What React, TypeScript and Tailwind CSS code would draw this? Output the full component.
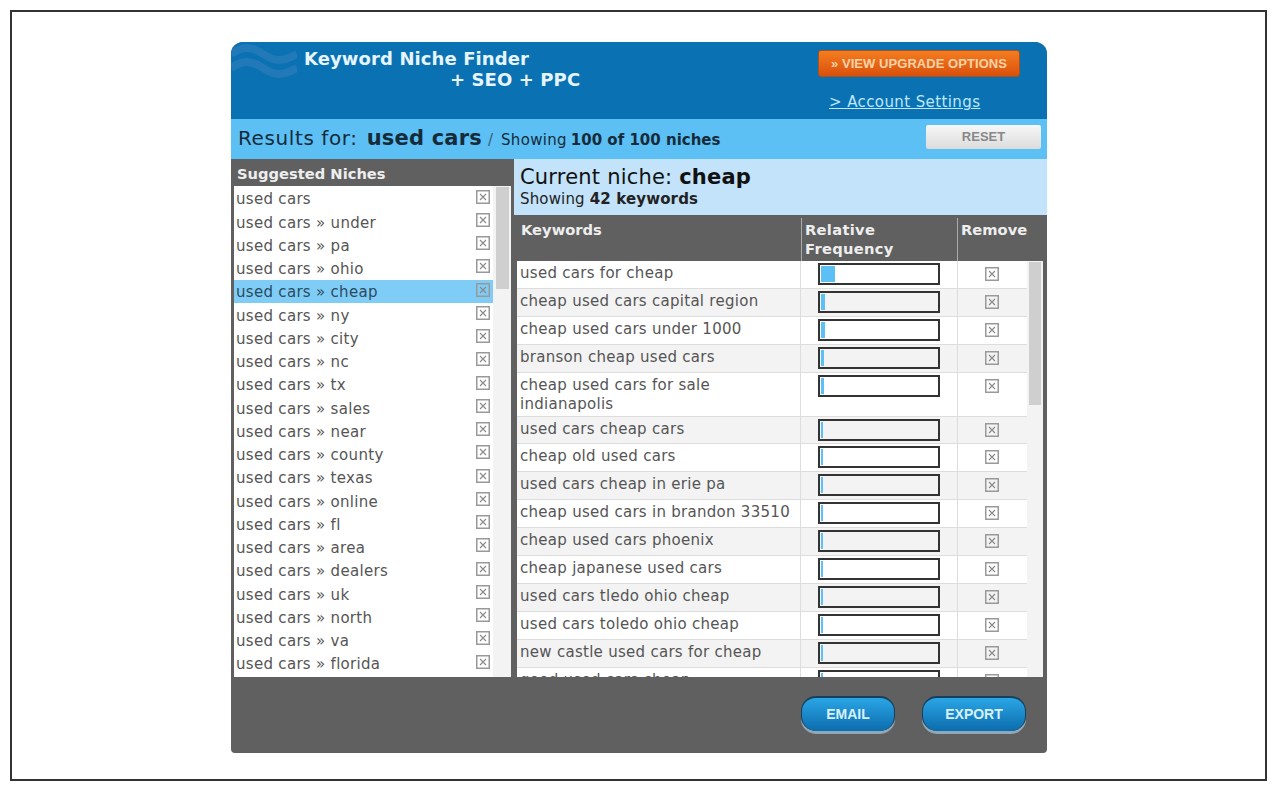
const niches = [
  "used cars",
  "used cars » under",
  "used cars » pa",
  "used cars » ohio",
  "used cars » cheap",
  "used cars » ny",
  "used cars » city",
  "used cars » nc",
  "used cars » tx",
  "used cars » sales",
  "used cars » near",
  "used cars » county",
  "used cars » texas",
  "used cars » online",
  "used cars » fl",
  "used cars » area",
  "used cars » dealers",
  "used cars » uk",
  "used cars » north",
  "used cars » va",
  "used cars » florida",
];

const keywords = [
  { name: "used cars for cheap", fill: 14 },
  { name: "cheap used cars capital region", fill: 4 },
  { name: "cheap used cars under 1000", fill: 4 },
  { name: "branson cheap used cars", fill: 3 },
  { name: "cheap used cars for sale indianapolis", fill: 3, tall: true },
  { name: "used cars cheap cars", fill: 2 },
  { name: "cheap old used cars", fill: 2 },
  { name: "used cars cheap in erie pa", fill: 2 },
  { name: "cheap used cars in brandon 33510", fill: 2 },
  { name: "cheap used cars phoenix", fill: 2 },
  { name: "cheap japanese used cars", fill: 2 },
  { name: "used cars tledo ohio cheap", fill: 2 },
  { name: "used cars toledo ohio cheap", fill: 2 },
  { name: "new castle used cars for cheap", fill: 2 },
  { name: "good used cars cheap", fill: 2 },
];

function RemoveIcon() {
  return (
    <svg width="14" height="14" viewBox="0 0 14 14" className="shrink-0">
      <rect x="0.75" y="0.75" width="12.5" height="12.5" fill="none" stroke="#999" strokeWidth="1.5" />
      <path d="M4 4l6 6M10 4l-6 6" stroke="#888" strokeWidth="1.1" />
    </svg>
  );
}

function PillButton({ label, width }: { label: string; width: string }) {
  return (
    <button
      className={`${width} h-[35px] rounded-[15px] border-x border-t-2 border-b-0 border-[#17405c] bg-gradient-to-b from-[#2ba6e6] to-[#0a6cad] font-['Liberation_Sans',sans-serif] text-[14px] font-bold text-[#d8f0fc] shadow-[0_3px_0_#8fa9b8]`}
    >
      {label}
    </button>
  );
}

export default function App() {
  return (
    <div className="h-[794px] w-[1280px] overflow-hidden bg-white pt-[10px] pl-[10px] font-['DejaVu_Sans',sans-serif]">
      <div className="h-[771px] w-[1257px] border-2 border-[#333] pt-[30px] pl-[219px]">
        <div className="flex h-[711px] w-[816px] flex-col overflow-hidden rounded-t-[12px] rounded-b-[4px] bg-[#606060]">
          {/* header */}
          <header className="relative flex h-[77px] shrink-0 justify-between bg-[#0a71b3]">
            <svg width="66" height="34" viewBox="0 0 66 34" fill="none" className="absolute top-[2px] left-0">
              <path d="M0 10c12-8 20-8 32 0s20 8 34 0" stroke="#2179b8" strokeWidth="8" />
              <path d="M0 24c12-8 20-8 32 0s20 8 34 0" stroke="#2179b8" strokeWidth="8" />
            </svg>
            <div className="relative pt-[6px] pl-[73px] text-[18px] leading-[21px] font-bold tracking-[0.1px] text-[#e6f5fd]">
              <div>Keyword Niche Finder</div>
              <div className="pl-[146px]">+ SEO + PPC</div>
            </div>
            <div className="flex w-[229px] shrink-0 flex-col pt-[8px]">
              <button className="h-[27px] w-[202px] rounded-[3px] border border-[#a8521c] bg-gradient-to-b from-[#f47d20] to-[#d9500b] font-['Liberation_Sans',sans-serif] text-[13px] font-bold tracking-[0.05px] text-[#fbd3a8]">
                » VIEW UPGRADE OPTIONS
              </button>
              <a className="mt-[15px] ml-[11px] text-[15px] leading-[20px] tracking-[0.4px] text-[#bfe7fb] underline">&gt; Account Settings</a>
            </div>
          </header>

          {/* results bar */}
          <div className="flex h-[40px] shrink-0 items-center justify-between bg-[#5cc0f4] pr-[6px] pl-[7px]">
            <div className="-mt-[1px] flex items-baseline text-[#152b3a]">
              <span className="text-[20px] tracking-[0.6px]">Results for:</span>
              <span className="ml-[9px] text-[21px] font-bold tracking-[0.2px]">used cars</span>
              <span className="ml-[6px] text-[15px] text-[#3a5d73]">/</span>
              <span className="ml-[8px] text-[15px] tracking-[0.3px]">Showing</span>
              <span className="ml-[4px] text-[15px] font-bold">100 of 100 niches</span>
            </div>
            <button className="mb-[4px] h-[24px] w-[115px] rounded-[2px] bg-gradient-to-b from-[#f7f7f7] to-[#dcdcdc] font-['Liberation_Sans',sans-serif] text-[13px] font-bold text-[#888]">
              RESET
            </button>
          </div>

          <div className="flex min-h-0 flex-1">
            {/* left column */}
            <aside className="flex w-[283px] shrink-0 flex-col">
              <h2 className="h-[27px] shrink-0 pt-[5px] pl-[6px] text-[14.7px] leading-[20px] font-bold text-[#eee]">Suggested Niches</h2>
              <div className="mx-[3px] flex min-h-0 flex-1 overflow-hidden bg-white">
                <ul className="min-w-0 flex-1 pt-[1px]">
                  {niches.map((n, i) => (
                    <li
                      key={n}
                      className={`flex h-[23.25px] items-center justify-between pr-[3px] pl-[2px] text-[15px] tracking-[0.3px] ${
                        i === 4 ? "bg-[#7fcdf7] text-[#2b4a5e]" : "text-[#555]"
                      }`}
                    >
                      <span className="pt-[2px]">{n}</span>
                      <span className="pb-[4px]">
                        <RemoveIcon />
                      </span>
                    </li>
                  ))}
                </ul>
                <div className="w-[18px] shrink-0 bg-[#f3f3f3] pt-[1px] pl-[3px]">
                  <div className="h-[102px] w-[13px] bg-[#cfcfcf]" />
                </div>
              </div>
            </aside>

            {/* right column */}
            <section className="flex min-w-0 flex-1 flex-col">
              <div className="h-[56px] shrink-0 bg-[#c2e3fa] pt-[5px] pl-[6px] text-[#111]">
                <div className="text-[21px] leading-[26px] tracking-[0.2px]">
                  Current niche: <b>cheap</b>
                </div>
                <div className="text-[15px] leading-[18px] tracking-[0.15px] text-[#222]">
                  Showing <b>42 keywords</b>
                </div>
              </div>

              <div className="flex h-[46px] shrink-0 pt-[3px] text-[14.7px] leading-[19px] font-bold text-[#eee]">
                <div className="w-[287px] pt-[2px] pl-[7px]">Keywords</div>
                <div className="w-[156px] border-l border-[#aaa] pt-[2px] pl-[3px] tracking-[0.3px]">
                  Relative
                  <br />
                  Frequency
                </div>
                <div className="border-l border-[#aaa] pt-[2px] pl-[3px]">Remove</div>
              </div>

              <div className="mr-[4px] ml-[3px] flex min-h-0 flex-1 overflow-hidden bg-white">
                <div className="min-w-0 flex-1">
                  {keywords.map((k, i) => (
                    <div
                      key={k.name}
                      className={`flex border-b border-[#ddd] ${k.tall ? "h-[44px]" : "h-[27.9px]"} ${
                        i % 2 === 1 ? "bg-[#f3f3f3]" : "bg-white"
                      }`}
                    >
                      <div className="w-[283px] shrink-0 pt-[3px] pl-[3px] text-[15px] leading-[19px] tracking-[0.28px] text-[#555]">{k.name}</div>
                      <div className="w-[157px] shrink-0 border-l border-[#ddd] pt-[2px] pl-[17px]">
                        <div className="h-[22px] w-[122px] border-2 border-[#333] p-[1px]">
                          <div className="h-full bg-[#5cc0f4]" style={{ width: k.fill }} />
                        </div>
                      </div>
                      <div className="flex flex-1 justify-center border-l border-[#ddd] pt-[6px] pr-[2px]">
                        <RemoveIcon />
                      </div>
                    </div>
                  ))}
                </div>
                <div className="w-[16px] shrink-0 bg-[#f3f3f3] pt-[1px] pl-[2px]">
                  <div className="h-[143px] w-[12px] bg-[#cfcfcf]" />
                </div>
              </div>
            </section>
          </div>

          {/* footer */}
          <footer className="flex h-[76px] shrink-0 justify-end gap-[27px] pt-[19px] pr-[21px]">
            <PillButton label="EMAIL" width="w-[94px]" />
            <PillButton label="EXPORT" width="w-[104px]" />
          </footer>
        </div>
      </div>
    </div>
  );
}
